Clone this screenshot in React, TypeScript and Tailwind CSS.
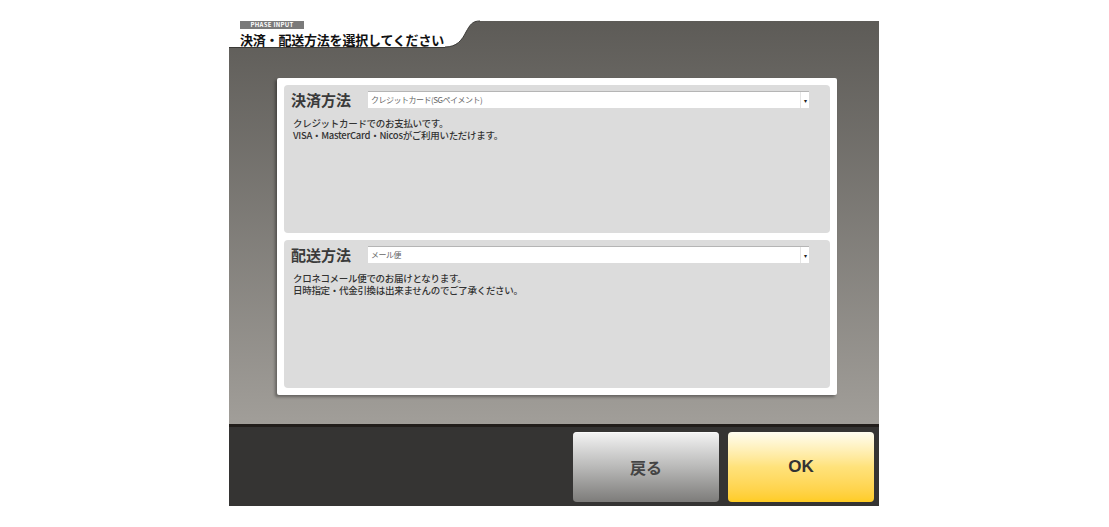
import React from 'react';

const FONT = { fontFamily: '"Noto Sans CJK JP", "Noto Sans", sans-serif' };

interface Section { label: string; value: string; lines: string[] }

const sections: Section[] = [
  {
    label: '決済方法',
    value: 'クレジットカード(SGペイメント)',
    lines: ['クレジットカードでのお支払いです。', 'VISA・MasterCard・Nicosがご利用いただけます。'],
  },
  {
    label: '配送方法',
    value: 'メール便',
    lines: ['クロネコメール便でのお届けとなります。', '日時指定・代金引換は出来ませんのでご了承ください。'],
  },
];

function Block({ s }: { s: Section }) {
  return (
    <div className="h-[148px] rounded-[4px] bg-[#dcdcdc] pl-[6px] pr-[21px] pt-[5px]">
      <div className="flex items-center h-[19px]">
        <div className="w-[78px] pl-[1px] text-[15px] font-bold leading-none text-[#3a3a3a]">{s.label}</div>
        <div className="flex-1 h-[17px] flex bg-white border-t border-[#b5b5b5]">
          <div className="flex-1 pl-[3px] text-[8px] leading-[15px] text-[#666] tracking-[-0.5px]">{s.value}</div>
          <div className="w-[9px] flex items-center justify-center border-l border-[#e4e4e4] text-[6px] text-[#222]">▾</div>
        </div>
      </div>
      <div className="mt-[8px] pl-[3px] text-[9.5px] font-medium leading-[12px] text-[#333] tracking-[-0.3px]">
        {s.lines.map((l) => (
          <div key={l}>{l}</div>
        ))}
      </div>
    </div>
  );
}

export default function App() {
  return (
    <div className="w-[1109px] h-[527px] bg-white overflow-hidden" style={FONT}>
      <div className="ml-[229px] w-[650px]">
        <div className="h-[424px] bg-linear-to-b from-[#5a5854] to-[#a19e99]">
          {/* header tab */}
          <div className="flex h-[48px]">
            <div className="w-[216px] bg-white pl-[11px] pt-[21px] border-b border-[#3a3936]">
              <div className="w-[64px] h-[8px] bg-[#7a7a7a] text-white text-[6px] leading-[8px] font-bold text-center tracking-[0.3px]">PHASE INPUT</div>
              <div className="mt-[3px] text-[13px] font-bold leading-[15px] text-[#111] tracking-[-0.2px]">決済・配送方法を選択してください</div>
            </div>
            <svg width="35" height="48" viewBox="0 0 35 48" className="block">
              <path d="M0 0 H35 V21 C27 21 25 25 21 32 C17 40 12 47 0 47 Z" fill="#fff" />
              <path d="M0 47 C12 47 17 40 21 32 C25 25 27 21 35 21" fill="none" stroke="#3a3936" strokeWidth="1" />
            </svg>
            <div className="flex-1">
              <div className="h-[21px] bg-white" />
            </div>
          </div>
          {/* form panel */}
          <div className="ml-[48px] mt-[30px] w-[560px] h-[317px] bg-white rounded-[2px] shadow-[-2px_2px_3px_rgba(0,0,0,0.35)] p-[7px] flex flex-col gap-[7px]">
            {sections.map((s) => (
              <Block key={s.label} s={s} />
            ))}
          </div>
        </div>
        {/* bottom bar */}
        <div className="h-[82px] bg-[#353433] border-t-[3px] border-[#221e1b] flex justify-end items-start pt-[5px] pr-[5px] gap-[9px]">
          <button className="w-[146px] h-[70px] rounded-[4px] bg-linear-to-b from-[#f4f4f4] via-[#b9b9b8] to-[#7d7c7a] text-[16px] font-bold text-[#444] shadow-[inset_0_1px_0_rgba(255,255,255,0.6)]">
            戻る
          </button>
          <button className="w-[146px] h-[70px] rounded-[4px] bg-linear-to-b from-[#fffdf0] via-[#ffe27a] to-[#ffcc22] text-[17px] font-bold text-[#333]" style={{ fontFamily: '"Liberation Sans", Arial, sans-serif' }}>
            OK
          </button>
        </div>
      </div>
    </div>
  );
}
